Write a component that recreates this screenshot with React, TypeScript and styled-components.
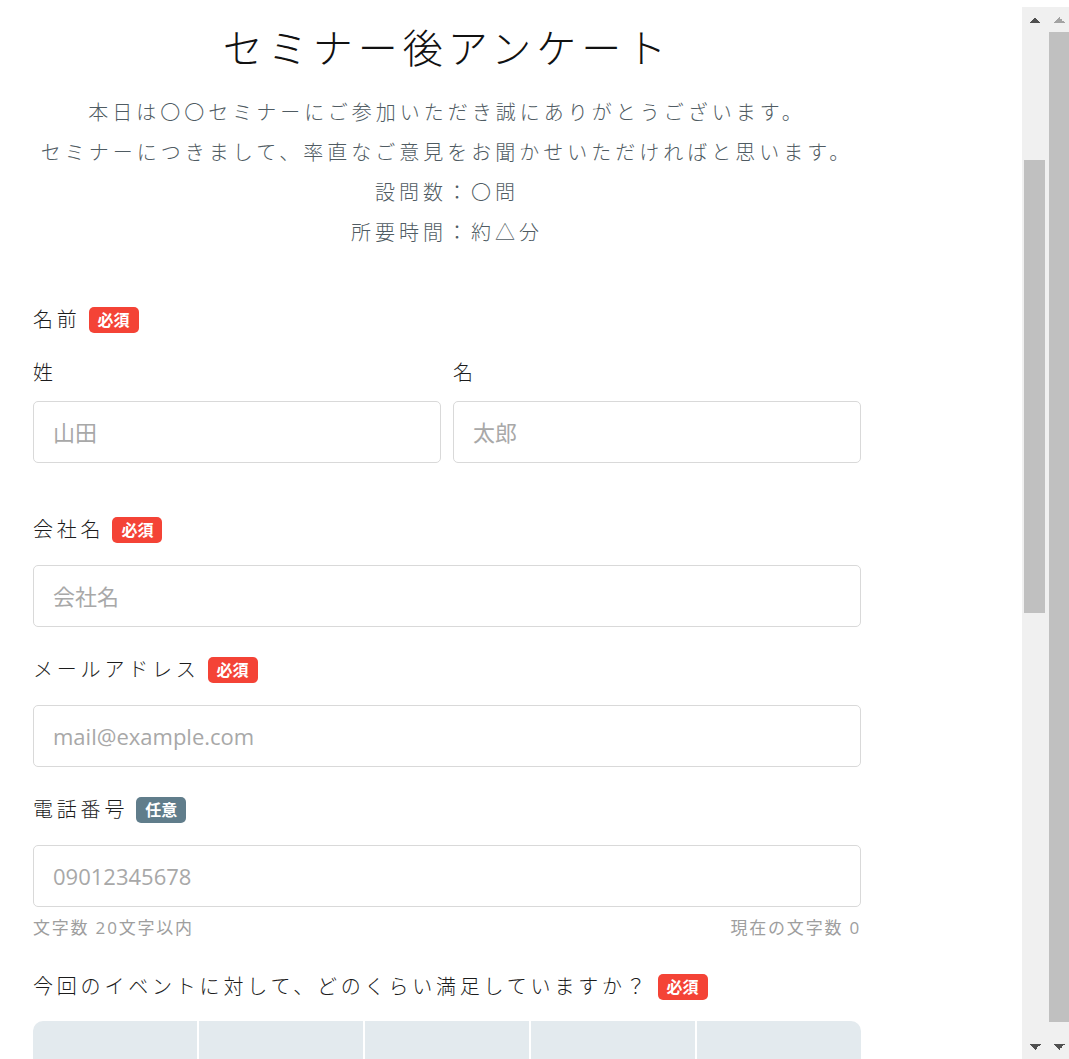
import React, { useState } from "react"
import styled, { createGlobalStyle, css } from "styled-components"

const GlobalStyle = createGlobalStyle`
  html, body {
    margin: 0;
    padding: 0;
    background: #fff;
    overflow: hidden;
  }
  body {
    font-family: "Open Sans", "Noto Sans CJK JP", sans-serif;
    color: #222;
  }
  * { box-sizing: border-box; }
`

const Page = styled.div`
  display: flex;
  height: 100vh;
`

const Main = styled.main`
  flex: 1;
  min-width: 0;
  overflow-y: auto;
  scrollbar-width: none;
`

// scrollbars of the framed preview, drawn beside the page
const Rails = styled.div`
  display: flex;
  flex: none;
  padding-top: 7px;
`

const Bar = styled.div<{ $width: number }>`
  display: flex;
  flex-direction: column;
  width: ${(p) => p.$width}px;
  background: #f0f0f0;
`

const BarButton = styled.div<{ $dir: "up" | "down"; $color: string; $shift?: number }>`
  flex: none;
  height: 25px;
  background-repeat: no-repeat;
  background-size: 6px 6px;
  background-position: calc(50% - 3px + ${(p) => p.$shift ?? 0}px) 50%,
    calc(50% + 3px + ${(p) => p.$shift ?? 0}px) 50%;
  ${({ $dir, $color }) =>
    $dir === "up"
      ? css`
          background-image: linear-gradient(to top left, ${$color} 50%, transparent 50%),
            linear-gradient(to top right, ${$color} 50%, transparent 50%);
        `
      : css`
          background-image: linear-gradient(to bottom left, ${$color} 50%, transparent 50%),
            linear-gradient(to bottom right, ${$color} 50%, transparent 50%);
        `}
`

const Track = styled.div<{ $offset: number }>`
  flex: 1;
  padding-top: ${(p) => p.$offset}px;
`

const Thumb = styled.div<{ $length: number; $inset: string }>`
  height: ${(p) => p.$length}px;
  margin: ${(p) => p.$inset};
  background: #c0c0c0;
`

const Content = styled.div`
  width: 828px;
  margin-left: 33px;
  padding-bottom: 120px;
`

const Title = styled.h1`
  margin: 18px 0 15px;
  font-size: 40px;
  font-weight: 300;
  line-height: 60px;
  letter-spacing: 5px;
  text-align: center;
  color: #111;
`

const Lead = styled.p`
  margin: 0;
  font-size: 20px;
  font-weight: 300;
  line-height: 40px;
  letter-spacing: 4px;
  text-align: center;
  color: #4f5b62;
`

const Form = styled.form`
  display: flex;
  flex-direction: column;
  margin-top: 47px;
`

const Section = styled.div<{ $gap?: number }>`
  display: flex;
  flex-direction: column;
  margin-top: ${(p) => p.$gap ?? 23}px;
  &:first-child {
    margin-top: 0;
  }
`

const Label = styled.label`
  display: flex;
  align-items: center;
  gap: 8px;
  font-size: 20px;
  font-weight: 300;
  line-height: 40px;
  letter-spacing: 3.8px;
  color: #1c1c1c;
`

const Badge = styled.span<{ $optional?: boolean }>`
  display: inline-flex;
  align-items: center;
  height: 26px;
  padding: 0 9px;
  border-radius: 5px;
  background: ${(p) => (p.$optional ? "#607d8b" : "#f44336")};
  color: #fff;
  font-size: 16px;
  font-weight: 700;
  letter-spacing: 0;
  line-height: 1;
`

const NameRow = styled.div`
  display: grid;
  grid-template-columns: 1fr 1fr;
  gap: 12px;
  margin-top: 13px;
`

const NameCol = styled.div`
  display: flex;
  flex-direction: column;
`

const Input = styled.input<{ $tight?: boolean }>`
  width: 100%;
  height: 62px;
  margin-top: ${(p) => (p.$tight ? 8 : 15)}px;
  padding: 0 19px;
  border: 1px solid #d9d9d9;
  border-radius: 5px;
  outline: none;
  font-family: "Open Sans", "Noto Sans CJK JP", sans-serif;
  font-size: 22px;
  color: #222;
  &::placeholder {
    color: #a8a8a8;
  }
  &:focus {
    border-color: #90a4ae;
  }
`

const Helper = styled.div`
  display: flex;
  justify-content: space-between;
  margin-top: 9px;
  font-size: 17px;
  line-height: 24px;
  letter-spacing: 1.8px;
  color: #9e9e9e;
`

const Scale = styled.div`
  display: grid;
  grid-template-columns: repeat(5, 1fr);
  gap: 2px;
  margin-top: 14px;
  border-radius: 10px 10px 0 0;
  overflow: hidden;
`

const ScaleHead = styled.div`
  padding: 64px 6px 18px;
  background: #e3eaee;
  font-size: 16px;
  letter-spacing: 1px;
  text-align: center;
  color: #37474f;
`

const ScaleCell = styled.label`
  display: flex;
  justify-content: center;
  align-items: center;
  height: 72px;
  background: #f5f7f8;
`

const Radio = styled.input`
  width: 22px;
  height: 22px;
  margin: 0;
`

const CheckList = styled.div`
  display: grid;
  grid-template-columns: 1fr 1fr;
  gap: 8px 12px;
  margin-top: 14px;
`

const CheckItem = styled.label`
  display: flex;
  align-items: center;
  gap: 12px;
  height: 52px;
  padding: 0 18px;
  border: 1px solid #d9d9d9;
  border-radius: 5px;
  font-size: 18px;
  letter-spacing: 2px;
`

const TextArea = styled.textarea`
  height: 220px;
  margin-top: 15px;
  padding: 16px 19px;
  border: 1px solid #d9d9d9;
  border-radius: 5px;
  resize: vertical;
  font-family: "Open Sans", "Noto Sans CJK JP", sans-serif;
  font-size: 20px;
  &::placeholder {
    color: #a8a8a8;
  }
`

const Submit = styled.button`
  align-self: center;
  width: 360px;
  height: 68px;
  margin-top: 60px;
  border: none;
  border-radius: 34px;
  background: #f44336;
  color: #fff;
  font-family: "Open Sans", "Noto Sans CJK JP", sans-serif;
  font-size: 22px;
  font-weight: 700;
  letter-spacing: 4px;
  cursor: pointer;
`

const levels = ["とても満足", "満足", "どちらでもない", "不満", "とても不満"]
const themes = ["マーケティング", "営業・セールス", "人事・採用", "DX・IT活用", "経営・財務", "その他"]

function App() {
  const [phone, setPhone] = useState("")

  return (
    <Page>
      <GlobalStyle />
      <Main>
        <Content>
          <Title>セミナー後アンケート</Title>
          <Lead>本日は〇〇セミナーにご参加いただき誠にありがとうございます。</Lead>
          <Lead>セミナーにつきまして、率直なご意見をお聞かせいただければと思います。</Lead>
          <Lead>設問数：〇問</Lead>
          <Lead>所要時間：約△分</Lead>

          <Form onSubmit={(e) => e.preventDefault()}>
            <Section>
              <Label as='div'>
                名前<Badge>必須</Badge>
              </Label>
              <NameRow>
                <NameCol>
                  <Label htmlFor='last-name'>姓</Label>
                  <Input $tight id='last-name' placeholder='山田' />
                </NameCol>
                <NameCol>
                  <Label htmlFor='first-name'>名</Label>
                  <Input $tight id='first-name' placeholder='太郎' />
                </NameCol>
              </NameRow>
            </Section>

            <Section $gap={47}>
              <Label htmlFor='company'>
                会社名<Badge>必須</Badge>
              </Label>
              <Input id='company' placeholder='会社名' />
            </Section>

            <Section>
              <Label htmlFor='mail'>
                メールアドレス<Badge>必須</Badge>
              </Label>
              <Input id='mail' type='email' placeholder='mail@example.com' />
            </Section>

            <Section>
              <Label htmlFor='tel'>
                電話番号<Badge $optional>任意</Badge>
              </Label>
              <Input
                id='tel'
                type='tel'
                maxLength={20}
                placeholder='09012345678'
                value={phone}
                onChange={(e) => setPhone(e.target.value)}
              />
              <Helper>
                <span>文字数 20文字以内</span>
                <span>現在の文字数 {phone.length}</span>
              </Helper>
            </Section>

            <Section $gap={27}>
              <Label as='div'>
                今回のイベントに対して、どのくらい満足していますか？<Badge>必須</Badge>
              </Label>
              <Scale>
                {levels.map((l) => (
                  <ScaleHead key={l}>{l}</ScaleHead>
                ))}
                {levels.map((l) => (
                  <ScaleCell key={l}>
                    <Radio type='radio' name='satisfaction' value={l} />
                  </ScaleCell>
                ))}
              </Scale>
            </Section>

            <Section $gap={47}>
              <Label as='div'>
                今後参加してみたいセミナーのテーマを教えてください<Badge $optional>任意</Badge>
              </Label>
              <CheckList>
                {themes.map((t) => (
                  <CheckItem key={t}>
                    <input type='checkbox' value={t} />
                    {t}
                  </CheckItem>
                ))}
              </CheckList>
            </Section>

            <Section $gap={47}>
              <Label htmlFor='comment'>
                ご意見・ご感想<Badge $optional>任意</Badge>
              </Label>
              <TextArea id='comment' placeholder='ご自由にご記入ください' />
            </Section>

            <Submit type='submit'>送信する</Submit>
          </Form>
        </Content>
      </Main>

      <Rails aria-hidden>
        <Bar $width={25}>
          <BarButton $dir='up' $color='#505050' />
          <Track $offset={128}>
            <Thumb $length={453} $inset='0 2px' />
          </Track>
          <BarButton $dir='down' $color='#505050' />
        </Bar>
        <Bar $width={22}>
          <BarButton $dir='up' $color='#a3a3a3' $shift={1} />
          <Track $offset={0}>
            <Thumb $length={990} $inset='0 0 0 2px' />
          </Track>
          <BarButton $dir='down' $color='#505050' $shift={1} />
        </Bar>
      </Rails>
    </Page>
  )
}

export default App
